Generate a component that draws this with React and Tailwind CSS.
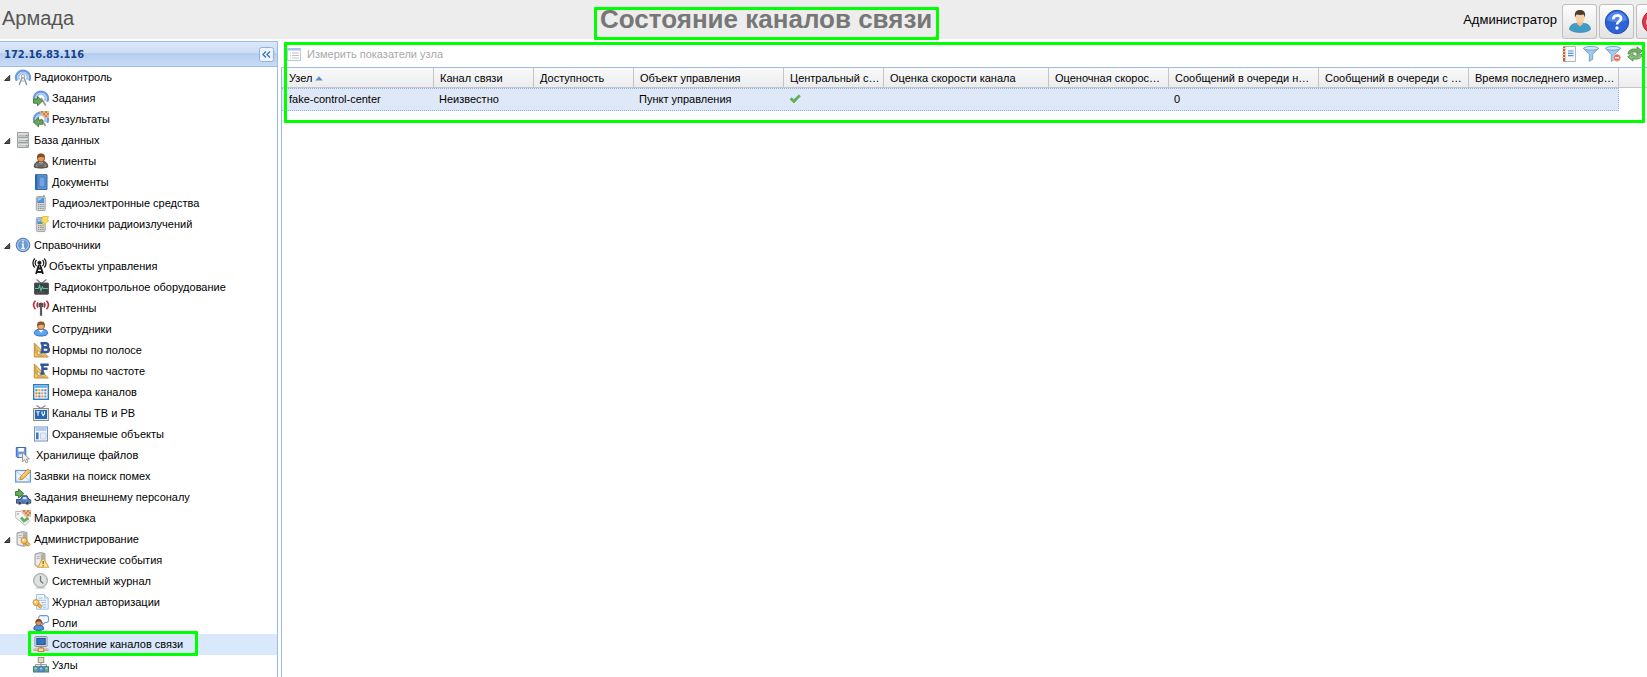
const Svg = ({ children, className = '' }) => (
  <svg width="16" height="16" viewBox="0 0 16 16" className={`block shrink-0 overflow-visible ${className}`}>
    {children}
  </svg>
);

/* ---- shared fragments ---- */
const Waves = () => (
  <>
    <path d="M1.800 11.800A7 7 0 1 1 14.200 11.800" fill="none" stroke="#6a9be0" strokeWidth="2.200" />
    <path d="M4.400 10.600A4.300 4.300 0 1 1 11.600 10.600" fill="none" stroke="#a5c6f0" strokeWidth="2" />
  </>
);
const Mast = () => (
  <>
    <path d="M7.300 8 4.200 16M8.700 8l3.100 8" stroke="#97999c" strokeWidth="1.500" fill="none" />
    <path d="M6.300 12h3.400" stroke="#b0b2b4" />
    <circle cx="8" cy="7.200" r="1.700" fill="#f4f4f4" stroke="#999" strokeWidth=".9" />
  </>
);
const Checker = () => (
  <g>
    <path d="M6 0h10v7l-2-.5-2 1L9 4.500z" fill="#eab58c" />
    <path d="M8 0h2v2H8zM12 0h2v2h-2zM10 2h2v2h-2zM14 2h2v2h-2zM12 4h2v2h-2z" fill="#c98752" />
  </g>
);
const Server = () => (
  <>
    <path d="M2 2 7.500.500 12 1.500V14l-3.500 1.500L2 13.500z" fill="#c9c9c9" stroke="#989898" strokeWidth=".9" />
    <path d="M8 2.500V15l3.800-1.300V2z" fill="#aeaeae" />
    <path d="M2.800 3 7.500 2v12.200l-4.700-1.200z" fill="#ececec" />
    <path d="M3.500 4.700 6.800 4.200M3.500 6.700l3.300-.4" stroke="#999" strokeWidth=".8" />
  </>
);
const Phone = () => (
  <>
    <path d="M11 0v3" stroke="#999" strokeWidth="1.600" />
    <rect x="3.300" y="1.600" width="8.900" height="14" rx="1.200" fill="#d3d5d7" stroke="#a2a4a7" />
    <rect x="4.800" y="3" width="5.800" height="4.700" fill="#4a97e6" stroke="#3c79bd" strokeWidth=".6" />
    <path d="M5 3.200h5L5 6z" fill="#a5d0f7" />
    <path d="M5 9.600h6M5 11.600h6M5 13.600h6" stroke="#85888c" strokeDasharray="1.300 .9" />
  </>
);
const Key = ({ x = 0, y = 0 }) => (
  <g transform={`translate(${x} ${y})`}>
    <path d="m4 4 5 4.500M6.500 8.500 8 6.800" stroke="#bd7d1c" strokeWidth="3.400" />
    <path d="m4 4 4.800 4.300" stroke="#f6bd54" strokeWidth="2" />
    <circle cx="3.500" cy="3.500" r="3" fill="#f8c868" stroke="#c98a28" strokeWidth=".9" />
    <circle cx="2.900" cy="2.900" r=".9" fill="#fff" />
  </g>
);
const Square = ({ children }) => (
  <>
    <path d="M1.300 1v14h14z" fill="#f2c570" stroke="#c18c34" />
    <path d="M4.300 7.800v4.300h4.300z" fill="#fff" stroke="#c18c34" strokeWidth=".9" />
    <path d="M2 4h1.400M2 6h1.400M2 8h1.400M2 10h1.400M5 14.300v-1M7 14.300v-1M9 14.300v-1M11 14.300v-1" stroke="#946a22" strokeWidth=".7" />
    {children}
  </>
);
const dots = ['#5b9f68', '#f0a050', '#6aa9dc', '#8e6fc0', '#ef7454', '#5b9f68', '#f0a050', '#5b9fe0', '#e8a04e', '#8e6fc0', '#ef9454', '#5b9fe0'];

/* ---- tree icons ---- */
const icons = {
  radio: <><Waves /><Mast /></>,
  tasks: (
    <>
      <Waves /><path d="m8 8 4.800 7.500" stroke="#999b9e" strokeWidth="1.800" />
      <path d="M.6 9h3.900V6.400l5 4.700-5 4.700v-2.600H.6z" fill="#66a857" stroke="#467f3b" />
    </>
  ),
  results: (
    <>
      <Waves /><path d="m8 8 4.500 7" stroke="#999b9e" strokeWidth="1.800" /><Checker />
      <path d="M9.800 9H5.500V6.400l-5 4.700 5 4.700v-2.600h4.300z" fill="#66a857" stroke="#467f3b" />
    </>
  ),
  database: (
    <>
      <path d="M2 .3h12v15.400H2z" fill="#b9bbbc" />
      {[0.5, 5.7, 10.9].map((y) => (
        <g key={y}>
          <rect x="2.500" y={y} width="11" height="4.600" rx=".5" fill="#dfe0e1" stroke="#96989a" strokeWidth=".9" />
          <path d={`M3.500 ${y + 2.9}h9`} stroke="#b4b6b8" />
          <path d={`M11.300 ${y + 3}h1.200`} stroke="#4f9c4d" strokeWidth="1.300" />
        </g>
      ))}
    </>
  ),
  clients: (
    <>
      <path d="M1.300 14c0-4 2.200-5.700 6.700-5.700s6.700 1.700 6.700 5.700c-3 1.400-10.400 1.400-13.400 0z" fill="#6f6c6a" stroke="#403d3b" />
      <path d="M6 8.800 8 13l2-4.200z" fill="#d0cfce" />
      <path d="M8 9.500V13" stroke="#403d3b" />
      <circle cx="8" cy="5.300" r="3.600" fill="#dd9b60" stroke="#85491f" strokeWidth=".8" />
      <path d="M4 5.300C3.900 1.800 5.300.5 8 .5s4.100 1.300 4 4.800C10.500 3.400 6.500 3.400 4 5.300z" fill="#8a4b1d" />
      <path d="M3.800 11.500v2.800M12.200 11.500v2.800" stroke="#aaa" strokeWidth=".8" />
    </>
  ),
  documents: (
    <>
      <path d="M2.500.7h11.500v14.800H2.500z" fill="#5f97d8" stroke="#3567a6" />
      <path d="M2.300.7h2.200v14.800H2.300z" fill="#2f66a8" />
      <path d="M6 3h6v10H6z" fill="#6fa4e0" stroke="#3d74b8" strokeWidth=".9" />
    </>
  ),
  phone: <Phone />,
  phoneSpark: (
    <>
      <Phone />
      <path d="M10 .5h5.500l-1.500 4H16L8 11l2.500-5H8z" fill="#fbe05e" stroke="#dcb944" strokeWidth=".8" />
    </>
  ),
  info: (
    <>
      <circle cx="8" cy="8" r="6.800" fill="#6c9ad4" stroke="#4a78b4" />
      <circle cx="8" cy="8" r="5.500" fill="none" stroke="#b9d0ee" />
      <path d="M8 3.800v1.700M6.800 7.200H8v4.200M6.300 11.500h3.400" stroke="#fff" strokeWidth="1.500" fill="none" />
    </>
  ),
  tower: (
    <g transform="translate(-1.500 0)" fill="none" stroke="#1c1c1c">
      <path d="M3.300.5C.8 3 .8 7 3.300 9.500M12.700.5c2.500 2.500 2.500 6.500 0 9" strokeWidth="1.300" />
      <path d="M5 2c-1.700 1.900-1.700 4.100 0 6M11 2c1.700 1.900 1.700 4.100 0 6" strokeWidth="1.200" />
      <circle cx="8" cy="4.800" r="1.600" fill="#1c1c1c" strokeWidth="1" />
      <path d="M7.300 7 4.500 16M8.700 7l2.800 9M6.300 10.500h3.400M5.300 14h5.400" strokeWidth="1.800" />
    </g>
  ),
  monitor: (
    <>
      <path d="m3.500.5 5 4 5-4" fill="none" stroke="#6b7f88" strokeWidth="1.200" />
      <rect x="1.500" y="4" width="14" height="11.200" rx=".6" fill="#3d4246" stroke="#55595c" />
      <path d="M2 9.500h3.500l1-3 1.500 5 1.300-3.500 1 1.500H15" fill="none" stroke="#4fc79a" strokeWidth="1.100" />
      <path d="M4 13.300h7" stroke="#c04555" strokeDasharray="1 1" />
    </>
  ),
  antenna: (
    <>
      <g fill="none" stroke="#b3303c" strokeWidth="1.600">
        <path d="M2.500.800C.2 3.300.2 6.700 2.500 9.200M5 2.500c-1.200 1.600-1.200 3.400 0 5" />
        <path d="M13.500.800c2.300 2.500 2.300 5.900 0 8.400M11 2.500c1.200 1.600 1.200 3.400 0 5" />
      </g>
      <circle cx="8" cy="5" r="2.500" fill="#4d4d4d" />
      <path d="M8 5v10.800" stroke="#5a5a5a" strokeWidth="2.200" />
    </>
  ),
  staff: (
    <>
      <path d="M1.300 12.800c0-3.200 2.200-4.600 6.700-4.600s6.700 1.400 6.700 4.600c-2 3-11.400 3-13.400 0z" fill="#5aa4f0" stroke="#2f6cba" />
      <path d="M5.500 8.800h5L8 12z" fill="#fff" />
      <circle cx="8" cy="5" r="3.500" fill="#e9ab70" stroke="#8b5127" strokeWidth=".8" />
      <path d="M4 5.300C3.900 1.700 5.300.5 8 .5s4.100 1.200 4 4.800C10.500 3.100 6.500 3.100 4 5.300z" fill="#935424" />
    </>
  ),
  band: <Square><path d="M9.500 1v9.500M7.500 1.300h5a1.900 1.900 0 0 1 1 4H10M10 5.500h3.500a2.200 2.200 0 0 1 0 4.500h-6" fill="none" stroke="#2f559a" strokeWidth="2.500" /></Square>,
  freq: <Square><path d="M9.500 1v10.500M7.300 1.700h8.400M10 5.800h4.500M7.500 10.500h4" fill="none" stroke="#2f559a" strokeWidth="2.500" /></Square>,
  calendar: (
    <>
      <rect x=".7" y=".7" width="14.600" height="14.600" fill="#fff" stroke="#2a7fb8" strokeWidth="1.400" />
      <path d="M1.500 2.700h13" stroke="#5bb0e8" strokeWidth="2.200" />
      {dots.map((c, i) => (
        <rect key={i} x={2.300 + (i % 4) * 3} y={5.2 + Math.floor(i / 4) * 3.1} width="2.200" height="2.100" fill={c} />
      ))}
    </>
  ),
  tv: (
    <>
      <path d="m3.500.5 4.500 3 4.500-3" fill="none" stroke="#888" strokeWidth="1.200" />
      <rect x=".6" y="3.500" width="14.800" height="12" fill="#e8eaec" stroke="#85888c" />
      <rect x="2" y="5" width="12" height="9" fill="#2468b2" />
      <path d="M3.300 6.700h3.400M5 6.700v4M9 6.200v2.500l1.200 1.800 1.300-1.800V6.200" fill="none" stroke="#fff" strokeWidth="1.100" />
    </>
  ),
  guarded: (
    <>
      <rect x="1.500" y="1" width="13" height="14" fill="#f4f8fd" stroke="#6c93cc" />
      <path d="M2.700 3.500h10.600" stroke="#a8c8ef" strokeWidth="2.800" />
      <path d="M3 6.500h2.600v6.800H3z" fill="#3f76c6" />
      <path d="M7.500 7h5.500v6H7.500z" fill="#e8edf3" stroke="#bac8dc" strokeWidth=".8" />
    </>
  ),
  storage: (
    <>
      <path d="M1.300.500h9.500v10H2.300l-1-1z" fill="#6f9be0" stroke="#3f69b0" />
      <path d="M3.300 1h5.600v3.600H3.300z" fill="#fff" />
      <path d="M3.800 7.200h4.500v3H3.800z" fill="#e3ebf6" />
      <path d="M7.500 5.300v9.400l2.200-2 1.600 3.200 1.700-.9-1.500-3h3z" fill="#ededed" stroke="#8f8f8f" strokeWidth=".9" />
    </>
  ),
  request: (
    <>
      <rect x=".6" y="2.500" width="14.800" height="11.500" fill="#edf4fd" stroke="#5f96d6" strokeWidth="1.200" />
      <path d="m1 3 7 6 6.500-6M1 13.500l5-5M15 13.500l-4-4" fill="none" stroke="#a4c4ea" />
      <path d="m4.800 12 .9-3.500L12.800.900l2.800 2.500-7.400 7.600z" fill="#f4bd58" stroke="#c08c34" strokeWidth=".9" />
      <path d="m7 8.500 6-6" stroke="#fbe0a4" />
    </>
  ),
  external: (
    <>
      <path d="M1.500 10.500h4l1.800-3.700h4.700l1.700 3.500 2 .7v3.200H1.500z" fill="#4f7cc0" stroke="#2b5089" />
      <path d="m7.300 10.300 1.100-2.300h2.700l1.100 2.300z" fill="#d5e5f7" />
      <circle cx="4.700" cy="14" r="1.700" fill="#333" stroke="#aaa" strokeWidth=".6" />
      <circle cx="12.300" cy="14" r="1.700" fill="#333" stroke="#aaa" strokeWidth=".6" />
      <path d="M.6 2.500h3V0l5.200 4.500L3.600 9V6.500h-3z" fill="#66ad55" stroke="#3a7b30" />
    </>
  ),
  marking: (
    <>
      <path d="M.7 1.500h5.500l8.500 9-4.500 5L.7 7.500z" fill="#f5f5f3" stroke="#bcbcb8" />
      <circle cx="3" cy="4" r=".9" fill="#aaa" />
      <Checker />
      <path d="m6 7.500 3 3.500 4.500-3" fill="none" stroke="#6aab6c" strokeWidth="2.800" />
    </>
  ),
  admin: <><Server /><Key x={5.500} y={6} /></>,
  events: (
    <>
      <Server />
      <path d="m10.300 6 5.400 9.300H4.700z" fill="#fdeaa0" stroke="#dba347" strokeWidth="1.100" />
      <path d="M10.200 9v3.300M10.200 13.200v1.200" stroke="#7b5c18" strokeWidth="1.200" />
    </>
  ),
  clock: (
    <>
      <ellipse cx="7.500" cy="15" rx="6" ry="1.200" fill="#ddd" />
      <circle cx="7.500" cy="7.500" r="7" fill="#cdd3d2" stroke="#a3a9a9" />
      <circle cx="7.500" cy="7.500" r="5.500" fill="#dde3e0" />
      <path d="M7.500 3v5l2.800 2.600" fill="none" stroke="#737b7a" strokeWidth="1.300" />
    </>
  ),
  auth: (
    <>
      <path d="M3.500.500h8l3.700 3.700v11H3.500z" fill="#eff6fe" stroke="#9cc0e8" />
      <path d="M11.500.500v3.700h3.700" fill="#cfe2f7" stroke="#9cc0e8" strokeWidth=".8" />
      <path d="M5.500 4h4M5.500 6.300h7.700M8 8.600h5.200M9 10.900h4.200M10 13.200h3.200" stroke="#9fc0e4" />
      <Key x={-0.500} y={5} />
    </>
  ),
  roles: (
    <>
      <path d="M7 .6h7l1.500 1.500v4L14 7.500h-2l-2.500 2.300V7.500H7L5.800 6V2z" fill="#f5f9fe" stroke="#6f9cd8" strokeWidth="1.100" />
      <path d="M.8 14.200c0-3 1.600-4.200 4.900-4.200s5 1.200 5 4.200c-2 1.800-7.900 1.800-9.900 0z" fill="#4f93e0" stroke="#2a62a8" />
      <circle cx="5.700" cy="7.600" r="2.900" fill="#d9975a" stroke="#804520" strokeWidth=".8" />
      <path d="M2.500 7.700C2.500 5 3.600 4 5.700 4s3.200 1 3.200 3.700c-1.500-1.700-4.700-1.700-6.400 0z" fill="#854719" />
    </>
  ),
  channels: (
    <>
      <rect x="2" y=".6" width="12" height="10" rx=".6" fill="#f0f1f2" stroke="#888b8e" />
      <rect x="3.800" y="2.300" width="8.400" height="6.400" fill="#2f74c4" stroke="#1d4c8a" />
      <path d="M8 10.500v3" stroke="#888" strokeWidth="2" />
      <path d="M.5 13.700h15" stroke="#b98350" strokeWidth="2" />
      <path d="M.5 13.700h15" stroke="#eedcc4" strokeWidth=".8" />
      <rect x="5.300" y="12" width="5.400" height="3.500" fill="#f9dba0" stroke="#c07d3c" />
    </>
  ),
  nodes: (
    <>
      <path d="M8 5v5M2.500 10V7.700h11V10" fill="none" stroke="#8a8a8a" />
      <rect x="5.200" y=".5" width="5.600" height="5" fill="#dddac9" stroke="#99957e" />
      <rect x=".5" y="9.700" width="4.500" height="5.300" fill="#65a79c" stroke="#3b7f76" />
      <rect x="5.900" y="9.700" width="4.400" height="5.300" fill="#5f98da" stroke="#2f69ad" />
      <rect x="11.200" y="9.700" width="4.300" height="5.300" fill="#65a79c" stroke="#3b7f76" />
      <path d="M1.500 11.300h2.500M7 11.300h2.200M12.300 11.300h2.200" stroke="#c4e0ea" />
    </>
  ),
};

const tree = [
  ['radio', 'Радиоконтроль', 'group'],
  ['tasks', 'Задания', 'child'],
  ['results', 'Результаты', 'child'],
  ['database', 'База данных', 'group'],
  ['clients', 'Клиенты', 'child'],
  ['documents', 'Документы', 'child'],
  ['phone', 'Радиоэлектронные средства', 'child'],
  ['phoneSpark', 'Источники радиоизлучений', 'child'],
  ['info', 'Справочники', 'group'],
  ['tower', 'Объекты управления', 'child', 'ml-0'],
  ['monitor', 'Радиоконтрольное оборудование', 'child', 'ml-[5px]'],
  ['antenna', 'Антенны', 'child'],
  ['staff', 'Сотрудники', 'child'],
  ['band', 'Нормы по полосе', 'child'],
  ['freq', 'Нормы по частоте', 'child'],
  ['calendar', 'Номера каналов', 'child'],
  ['tv', 'Каналы ТВ и РВ', 'child'],
  ['guarded', 'Охраняемые объекты', 'child'],
  ['storage', 'Хранилище файлов', 'leaf', 'ml-[5px]'],
  ['request', 'Заявки на поиск помех', 'leaf'],
  ['external', 'Задания внешнему персоналу', 'leaf'],
  ['marking', 'Маркировка', 'leaf'],
  ['admin', 'Администрирование', 'group'],
  ['events', 'Технические события', 'child'],
  ['clock', 'Системный журнал', 'child'],
  ['auth', 'Журнал авторизации', 'child'],
  ['roles', 'Роли', 'child'],
  ['channels', 'Состояние каналов связи', 'child'],
  ['nodes', 'Узлы', 'child'],
];

const TreeRow = ({ icon, label, kind, gap = 'ml-[3px]' }) => {
  const active = icon === 'channels';
  return (
    <li className={`relative flex h-[21px] shrink-0 items-center ${kind === 'child' ? 'pl-[33px]' : 'pl-[4px]'} ${active ? 'bg-[#d9e8fb]' : ''}`}>
      {kind !== 'child' && (
        <span className="w-[11px] shrink-0">
          {kind === 'group' && (
            <svg width="7" height="6" viewBox="0 0 7 6" className="block">
              <path d="M5.700 .5v5H.6z" fill="#555" stroke="#222" strokeWidth=".9" />
            </svg>
          )}
        </span>
      )}
      <Svg className="-mt-px">{icons[icon]}</Svg>
      <span className={`${gap} whitespace-nowrap`}>{label}</span>
      {active && <span className="absolute -top-[3px] left-[28px] h-[25px] w-[170px] rounded-[1px] border-[3px] border-[#00ff00]" />}
    </li>
  );
};

const columns = [
  ['Узел', 'w-[152px]', 'fake-control-center'],
  ['Канал связи', 'w-[100px]', 'Неизвестно'],
  ['Доступность', 'w-[100px]', ''],
  ['Объект управления', 'w-[150px]', 'Пункт управления'],
  ['Центральный с…', 'w-[100px]', 'check'],
  ['Оценка скорости канала', 'w-[165px]', ''],
  ['Оценочная скорос…', 'w-[120px]', ''],
  ['Сообщений в очереди н…', 'w-[150px]', '0'],
  ['Сообщений в очереди с …', 'w-[150px]', ''],
  ['Время последнего измер…', 'w-[150px]', ''],
];

const HeaderButton = ({ children }) => (
  <button className="flex h-[35px] w-[35px] shrink-0 items-center justify-center rounded-[3px] border border-[#bfbfbf] bg-linear-to-b from-[#fdfdfd] to-[#e3e3e3]">
    {children}
  </button>
);

const Funnel = () => (
  <>
    <path d="M.5 2.300 6.300 8.500v6.800l3.400-2V8.500l5.800-6.200z" fill="#9fcbea" stroke="#6a9fc9" strokeWidth=".9" />
    <ellipse cx="8" cy="2.300" rx="7.500" ry="1.800" fill="#d4eafa" stroke="#6a9fc9" strokeWidth=".9" />
  </>
);

export default function App() {
  return (
    <div className="relative flex h-[677px] w-[1647px] flex-col overflow-hidden bg-white font-['Liberation_Sans',sans-serif] text-[11px] leading-[13px] text-black">
      <header className="flex h-[39px] shrink-0 bg-[#ededed]">
        <div className="w-[594px] shrink-0 pl-[2px] pt-[6px] text-[20px] leading-[24px] text-[#555]">Армада</div>
        <div className="h-[33px] w-[345px] shrink-0 translate-y-[7px] rounded-[1px] border-[3px] border-[#00ff00] pl-[3px]">
          <h1 className="-mt-[4px] whitespace-nowrap text-[26px] font-bold leading-[26px] text-[#777]">Состояние каналов связи</h1>
        </div>
        <div className="flex flex-1 justify-end overflow-hidden pt-[4px]">
          <span className="mr-[5px] mt-[8px] text-[13px] leading-[15px]">Администратор</span>
          <HeaderButton>
            <svg width="24" height="26" viewBox="0 0 24 26" className="shrink-0">
              <path d="M1.500 20.500c0-4.500 3.500-6.500 10.500-6.500s10.500 2 10.500 6.500c-4 4-17 4-21 0z" fill="#3f9cc6" stroke="#2e7fa5" strokeWidth=".6" />
              <path d="M9 12h6v3l-3 2.500L9 15z" fill="#eebd90" />
              <ellipse cx="12" cy="8.500" rx="4.500" ry="5.800" fill="#f6d0a8" />
              <path d="M7 8.500C6.300 3 8 1 12 1s5.800 2 5 7.500L15.800 5.500c-2 .6-5 .4-7.500 0z" fill="#4e3a2b" />
            </svg>
          </HeaderButton>
          <div className="ml-[2px] flex">
            <HeaderButton>
              <svg width="26" height="26" viewBox="0 0 26 26" className="shrink-0">
                <circle cx="13" cy="13" r="11.700" fill="#2d63d4" stroke="#1f4fae" />
                <path d="M3 11A10.200 10.200 0 0 1 23 11C17 14 9 14 3 11z" fill="#5288ea" />
                <path d="M9.300 10.200c0-5 7.700-4.700 7.700-.7 0 2.700-4 2.800-4 6.100" fill="none" stroke="#fff" strokeWidth="2.700" />
                <circle cx="13" cy="19" r="1.700" fill="#fff" />
              </svg>
            </HeaderButton>
          </div>
          <div className="ml-[2px] w-[11px] shrink-0 overflow-hidden">
            <HeaderButton>
              <svg width="26" height="26" viewBox="0 0 26 26" className="shrink-0">
                <circle cx="13" cy="13" r="11.500" fill="#d93c4c" stroke="#a32734" />
                <path d="M9 8a6.500 6.500 0 1 0 8 0M13 5v8" fill="none" stroke="#fff" strokeWidth="2.500" />
              </svg>
            </HeaderButton>
          </div>
        </div>
      </header>

      <div className="mt-[2px] flex min-h-0 flex-1">
        <aside className="flex w-[278px] shrink-0 flex-col border-r border-t border-[#99bce8]">
          <div className="flex h-[25px] shrink-0 items-center justify-between border-b border-[#99bce8] bg-[linear-gradient(#dce8f7_0%,#ccddf3_45%,#b5cef0_46%,#b5cef0_50%,#c9dbf4_100%)] pl-[4px] pr-[3px]">
            <span className="pt-px font-['DejaVu_Sans_Condensed','DejaVu_Sans',sans-serif] text-[11px] font-bold text-[#15428b] [font-stretch:condensed]">172.16.83.116</span>
            <svg width="15" height="15" viewBox="0 0 15 15" className="shrink-0">
              <rect x=".5" y=".5" width="14" height="14" rx="2" fill="#eef4fc" stroke="#8fb2de" />
              <path d="M7 4.500 4 7.500l3 3M11 4.500l-3 3 3 3" fill="none" stroke="#456fae" strokeWidth="1.400" />
            </svg>
          </div>
          <ul className="flex flex-col">
            {tree.map(([icon, label, kind, gap]) => (
              <TreeRow key={icon} icon={icon} label={label} kind={kind} gap={gap} />
            ))}
          </ul>
        </aside>

        <main className="ml-[3px] flex min-w-0 flex-1 flex-col">
          <div className="flex h-[26px] shrink-0 items-center pl-[6px] pr-[4px]">
            <svg width="14" height="13" viewBox="0 0 14 13" className="opacity-60">
              <rect x=".5" y=".5" width="13" height="12" fill="#fff" stroke="#8aa5cf" />
              <path d="M1 1.500h12" stroke="#6c9be0" strokeWidth="2" />
              <path d="M3 5h1M5 5h7M3 7.500h1M5 7.500h7M3 10h1M5 10h7" stroke="#999" />
            </svg>
            <span className="ml-[6px] text-[#a9a9a9]">Измерить показатели узла</span>
            <div className="ml-auto flex gap-[6px]">
              <Svg>
                <path d="M3.500.500h11v15h-11z" fill="#f4f8fd" stroke="#b4b8bd" />
                <path d="M2 .5h2.300v15H2z" fill="#b5673f" />
                <path d="M1 2.500h3M1 5.500h3M1 8.500h3M1 11.500h3" stroke="#e9c9b4" />
                <path d="M7 5h5.500M7 7.300h5.500M7 9.600h5.500" stroke="#5a8ed6" strokeWidth="1.200" />
              </Svg>
              <Svg><Funnel /></Svg>
              <Svg>
                <Funnel />
                <circle cx="12" cy="11.700" r="3.700" fill="#ec6a52" stroke="#fbe5e0" strokeWidth=".7" />
                <path d="M10 11.700h4" stroke="#fff" strokeWidth="1.500" />
              </Svg>
              <Svg>
                <path d="M1 8C1 4 5 2 10 3.300V.8l5.300 4.400L10 9V6.500C7 5.500 4 6 3.500 8z" fill="#6db062" stroke="#4a8a44" strokeWidth=".8" />
                <path d="M15 8.300c0 4-4 5.700-9 4.400v2.500L.7 10.800 6 7.300v2.200c3 .8 6 .4 6.500-1.200z" fill="#86c17a" stroke="#4a8a44" strokeWidth=".8" />
              </Svg>
            </div>
          </div>

          <section className="flex flex-1 flex-col border-l border-t border-[#99bce8]">
            <div className="flex h-[20px] shrink-0 border-b border-[#c5c5c5] bg-linear-to-b from-[#fafafa] to-[#ebecee]">
              {columns.map(([title, width], i) => (
                <div key={title} className={`flex shrink-0 items-center border-r border-[#c5c5c5] pt-px ${i === 0 ? 'pl-[7px]' : 'pl-[6px]'} ${width}`}>
                  <span className="whitespace-pre">{title}</span>
                  {i === 0 && (
                    <svg width="8" height="5" viewBox="0 0 8 5" className="ml-[3px] mt-px"><path d="M4 .3 7.800 4.500H.2z" fill="#5c8fce" /></svg>
                  )}
                </div>
              ))}
            </div>
            <div className="flex h-[23px] w-[1337px] shrink-0 border border-l-0 border-dotted border-[#8db0e6] bg-[#dfe8f6]">
              {columns.map(([title, width, value], i) => (
                <div key={title} className={`flex shrink-0 items-center ${i === 0 ? 'pl-[7px]' : 'pl-[5px]'} ${width}`}>
                  {value === 'check' ? (
                    <svg width="12" height="10" viewBox="0 0 12 10" className="-mt-[2px]"><path d="m1 5.300 1.800-1.600 2 2L10 .8l1.300 1.400L5 9z" fill="#5fb556" stroke="#4b9a48" strokeWidth=".6" /></svg>
                  ) : (
                    <span className="whitespace-nowrap">{value}</span>
                  )}
                </div>
              ))}
            </div>
          </section>
        </main>
      </div>
      <div className="pointer-events-none absolute left-[284px] top-[42px] h-[81px] w-[1361px] rounded-[1px] border-[3px] border-[#00ff00]" />
    </div>
  );
}
